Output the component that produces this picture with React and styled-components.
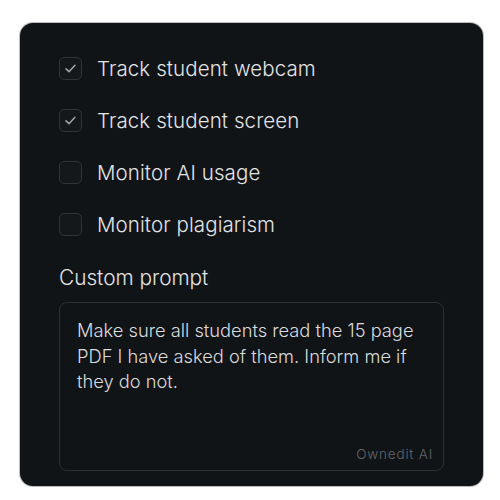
import styled, { createGlobalStyle } from "styled-components";

const GlobalStyle = createGlobalStyle`
  html, body {
    margin: 0;
    padding: 0;
    background: #ffffff;
  }
  body {
    font-family: Inter, "Noto Sans", sans-serif;
  }
`;

const Page = styled.div`
  width: 500px;
  height: 500px;
  box-sizing: border-box;
  padding: 23px 17px 14px 20px;
`;

const Card = styled.div`
  box-sizing: border-box;
  height: 463px;
  background: #111417;
  border-radius: 13px;
  box-shadow: 0 0 0 1px rgba(60, 62, 66, 0.35);
  padding: 34px 39px 15px 39px;
  display: flex;
  flex-direction: column;
`;

const List = styled.div`
  display: flex;
  flex-direction: column;
  gap: 29px;
`;

const Row = styled.label`
  display: flex;
  align-items: center;
  gap: 15px;
  height: 23px;
  cursor: pointer;
`;

const Box = styled.span`
  box-sizing: border-box;
  width: 23px;
  height: 23px;
  border-radius: 5px;
  border: 1px solid #303337;
  background: #15181b;
  display: flex;
  align-items: center;
  justify-content: center;
  svg {
    display: block;
  }
`;

const Label = styled.span`
  color: #e3e4e5;
  font-size: 20.5px;
  font-weight: 350;
  letter-spacing: 0.1px;
`;

const SectionTitle = styled.div`
  color: #e3e4e5;
  font-size: 20.8px;
  font-weight: 350;
  margin-top: 29px;
  line-height: 25px;
`;

const Prompt = styled.div`
  position: relative;
  box-sizing: border-box;
  margin-top: 12px;
  flex: 1;
  border: 1px solid #2c2f33;
  border-radius: 8px;
  background: #111417;
  padding: 15px 17px;
  color: #dadbdd;
  font-size: 18.3px;
  font-weight: 350;
  line-height: 25.5px;
`;

const Brand = styled.span`
  position: absolute;
  right: 10px;
  bottom: 8px;
  color: #62656a;
  font-size: 13.5px;
  letter-spacing: 0.8px;
  line-height: 16px;
`;

const Check = () => (
  <svg width="13" height="13" viewBox="0 0 14 14" fill="none">
    <path
      d="M2.2 7.4 L5.4 10.4 L11.8 3.6"
      stroke="#a3a5a8"
      strokeWidth="1.6"
      strokeLinecap="round"
      strokeLinejoin="round"
    />
  </svg>
);

const options = [
  { label: "Track student webcam", checked: true },
  { label: "Track student screen", checked: true },
  { label: "Monitor AI usage", checked: false },
  { label: "Monitor plagiarism", checked: false },
];

export default function App() {
  return (
    <>
      <GlobalStyle />
      <Page>
        <Card>
          <List>
            {options.map((o) => (
              <Row key={o.label}>
                <Box>{o.checked && <Check />}</Box>
                <Label>{o.label}</Label>
              </Row>
            ))}
          </List>
          <SectionTitle>Custom prompt</SectionTitle>
          <Prompt>
            Make sure all students read the 15 page PDF I have asked of them.
            Inform me if they do not.
            <Brand>Ownedit AI</Brand>
          </Prompt>
        </Card>
      </Page>
    </>
  );
}
